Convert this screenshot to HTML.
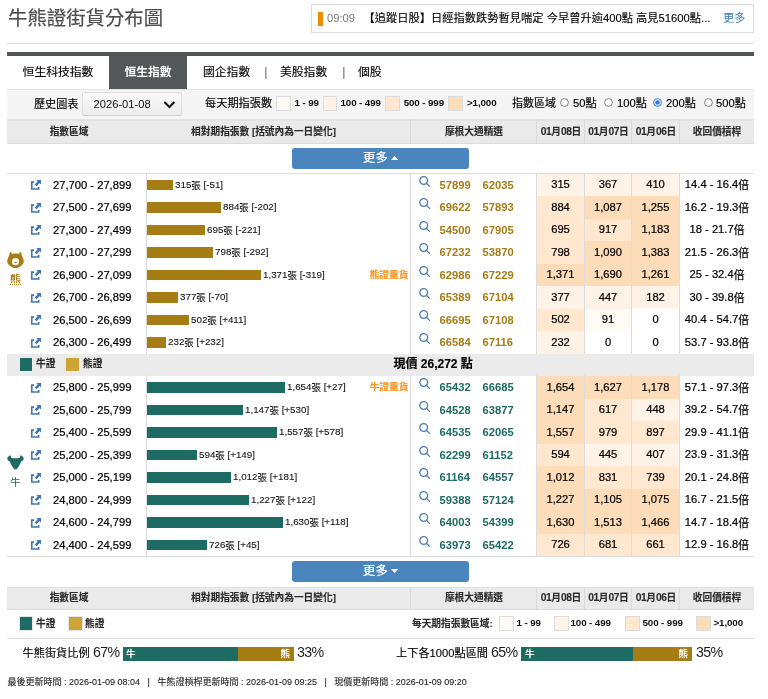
<!DOCTYPE html>
<html lang="zh-Hant"><head><meta charset="utf-8"><title>牛熊證街貨分布圖</title>
<style>
html,body{margin:0;padding:0;background:#fff;}
body{width:768px;height:699px;position:relative;overflow:hidden;font-family:"Liberation Sans","Noto Sans CJK TC",sans-serif;color:#222;}
.a{position:absolute;white-space:nowrap;}
.c{text-align:center;}
.b{font-weight:bold;}
.t{font-size:11.2px;line-height:14px;color:#000;-webkit-text-stroke:0.22px #000;}
.y{position:relative;top:1px;font-size:10.8px;}
.s{font-size:9.8px;line-height:14px;color:#111;-webkit-text-stroke:0.1px #111;}
.z{position:relative;top:1.2px;font-size:9.4px;}
.hd{font-size:9.7px;line-height:14px;font-weight:bold;color:#2a2a2a;-webkit-text-stroke:0.1px #2a2a2a;}
.jp{font-size:11.2px;line-height:14px;font-weight:bold;}
.d{font-size:10.3px;letter-spacing:-0.45px;}
.lg{font-size:9.8px;line-height:14px;color:#111;letter-spacing:-0.12px;}
.ln{position:absolute;background:#dcdcdc;}
svg{position:absolute;overflow:visible;}
#w{position:absolute;left:0;top:0;width:768px;height:699px;will-change:transform;}
</style></head><body><div id="w">

<div class="a" style="left:8px;top:4.4px;font-size:19.4px;line-height:28px;color:#4d4e50;-webkit-text-stroke:0.2px #4d4e50;">牛熊證街貨分布圖</div>
<div class="a" style="left:311px;top:4px;width:441px;height:27px;border:1px solid #dcdcdc;background:#fff;"></div>
<div class="a" style="left:318px;top:12px;width:5px;height:14px;background:#f08c00;"></div>
<div class="a" style="left:327px;top:11px;font-size:11.2px;line-height:15px;color:#777;">09:09</div>
<div class="a" style="left:363.5px;top:11px;font-size:11.25px;line-height:15px;color:#000;-webkit-text-stroke:0.12px #000;">【追蹤日股】日經指數跌勢暫見喘定 今早曾升逾400點 高見51600點...</div>
<div class="a" style="left:723px;top:11px;font-size:11.2px;line-height:15px;color:#3a78b5;">更多</div>
<div class="ln" style="left:7px;top:43px;width:747px;height:1px;background:#dedede;"></div>
<div class="a" style="left:7px;top:52px;width:747px;height:4px;background:#53575a;"></div>
<div class="a" style="left:109px;top:56px;width:78px;height:33px;background:#53575a;"></div>
<div class="a c" style="left:7px;top:64.3px;width:102px;font-size:11.8px;line-height:16px;color:#000;-webkit-text-stroke:0.12px #000;">恒生科技指數</div>
<div class="a c b" style="left:109px;top:64.3px;width:78px;font-size:11.8px;line-height:16px;color:#fff;">恒生指數</div>
<div class="a" style="left:203px;top:64.3px;font-size:11.8px;line-height:16px;color:#000;-webkit-text-stroke:0.12px #000;">國企指數</div>
<div class="a" style="left:264.2px;top:64px;font-size:12.4px;line-height:16px;color:#666;">|</div>
<div class="a" style="left:280px;top:64.3px;font-size:11.8px;line-height:16px;color:#000;-webkit-text-stroke:0.12px #000;">美股指數</div>
<div class="a" style="left:342.2px;top:64px;font-size:12.4px;line-height:16px;color:#666;">|</div>
<div class="a" style="left:358px;top:64.3px;font-size:11.8px;line-height:16px;color:#000;-webkit-text-stroke:0.12px #000;">個股</div>
<div class="a" style="left:7px;top:89px;width:747px;height:30.5px;background:#f5f5f5;border-top:1px solid #e4e4e4;box-sizing:border-box;"></div>
<div class="a" style="left:34px;top:95.5px;font-size:11.1px;line-height:16px;color:#000;-webkit-text-stroke:0.15px #000;">歷史圖表</div>
<div class="a" style="left:82px;top:92px;width:100px;height:24px;box-sizing:border-box;border:1px solid #dcdcdc;border-bottom-color:#cfcfcf;background:linear-gradient(#f8f8f8,#ededed);border-radius:2px;"></div>
<div class="a" style="left:93.5px;top:96px;font-size:11.2px;line-height:16px;color:#111;">2026-01-08</div>
<svg style="left:163px;top:100px;" width="13" height="9" viewBox="0 0 13 9"><path d="M1.4 2 L6.4 7 L11.4 2" fill="none" stroke="#111" stroke-width="2"/></svg>
<div class="a" style="left:205px;top:95px;font-size:11.2px;line-height:16px;color:#000;-webkit-text-stroke:0.15px #000;">每天期指張數</div>
<div class="a" style="left:276px;top:96px;width:15px;height:15px;background:#fffaf3;border:1px solid #dcdcdc;box-sizing:border-box;"></div>
<div class="a b lg" style="left:294.5px;top:95.5px;">1 - 99</div>
<div class="a" style="left:323px;top:96px;width:14px;height:15px;background:#fff2e6;border:1px solid #dcdcdc;box-sizing:border-box;"></div>
<div class="a b lg" style="left:340.5px;top:95.5px;">100 - 499</div>
<div class="a" style="left:385px;top:96px;width:15px;height:15px;background:#ffe7d0;border:1px solid #dcdcdc;box-sizing:border-box;"></div>
<div class="a b lg" style="left:403.7px;top:95.5px;">500 - 999</div>
<div class="a" style="left:448px;top:96px;width:15px;height:15px;background:#fdddb9;border:1px solid #dcdcdc;box-sizing:border-box;"></div>
<div class="a b lg" style="left:467px;top:95.5px;">&gt;1,000</div>
<div class="a" style="left:512px;top:95px;font-size:11.0px;line-height:16px;color:#000;-webkit-text-stroke:0.15px #000;">指數區域</div>
<svg style="left:560.3px;top:98.2px;" width="9" height="9" viewBox="0 0 9 9"><circle cx="4.5" cy="4.5" r="3.9" fill="#fff" stroke="#767676" stroke-width="0.9"/></svg>
<div class="a" style="left:573px;top:95px;font-size:11.2px;line-height:16px;color:#000;-webkit-text-stroke:0.15px #000;">50點</div>
<svg style="left:604.3px;top:98.2px;" width="9" height="9" viewBox="0 0 9 9"><circle cx="4.5" cy="4.5" r="3.9" fill="#fff" stroke="#767676" stroke-width="0.9"/></svg>
<div class="a" style="left:617px;top:95px;font-size:11.2px;line-height:16px;color:#000;-webkit-text-stroke:0.15px #000;">100點</div>
<svg style="left:653.3px;top:98.2px;" width="9" height="9" viewBox="0 0 9 9"><circle cx="4.5" cy="4.5" r="3.9" fill="#fff" stroke="#2d7be0" stroke-width="1"/><circle cx="4.5" cy="4.5" r="2.3" fill="#2d7be0"/></svg>
<div class="a" style="left:666px;top:95px;font-size:11.2px;line-height:16px;color:#000;-webkit-text-stroke:0.15px #000;">200點</div>
<svg style="left:704.3px;top:98.2px;" width="9" height="9" viewBox="0 0 9 9"><circle cx="4.5" cy="4.5" r="3.9" fill="#fff" stroke="#767676" stroke-width="0.9"/></svg>
<div class="a" style="left:716px;top:95px;font-size:11.2px;line-height:16px;color:#000;-webkit-text-stroke:0.15px #000;">500點</div>
<div class="a" style="left:7px;top:119px;width:747px;height:24.5px;background:#eaeaea;border-top:2px solid #e2e2e2;border-bottom:1px solid #dedede;box-sizing:border-box;"></div>
<div class="a c hd" style="left:7px;top:124.55px;width:124px;">指數區域</div>
<div class="a c hd" style="left:190.5px;top:124.55px;width:146px;">相對期指張數 [括號內為一日變化]</div>
<div class="a c hd" style="left:411px;top:124.55px;width:126px;">摩根大通精選</div>
<div class="a c hd" style="left:537px;top:124.55px;width:48px;"><span class="d">01</span>月<span class="d">08</span>日</div>
<div class="a c hd" style="left:585px;top:124.55px;width:47px;"><span class="d">01</span>月<span class="d">07</span>日</div>
<div class="a c hd" style="left:632px;top:124.55px;width:48px;"><span class="d">01</span>月<span class="d">06</span>日</div>
<div class="a c hd" style="left:680px;top:124.55px;width:74px;">收回價槓桿</div>
<div class="ln" style="left:410px;top:119px;width:1px;height:24.5px;background:#dadada;"></div>
<div class="ln" style="left:536px;top:119px;width:1px;height:24.5px;background:#dadada;"></div>
<div class="ln" style="left:584px;top:119px;width:1px;height:24.5px;background:#dadada;"></div>
<div class="ln" style="left:631px;top:119px;width:1px;height:24.5px;background:#dadada;"></div>
<div class="ln" style="left:679px;top:119px;width:1px;height:24.5px;background:#dadada;"></div>
<div class="a" style="left:292px;top:148px;width:177px;height:21px;background:#4a86bd;border-radius:3px;"></div>
<div class="a" style="left:363px;top:150px;font-size:12.4px;line-height:17px;color:#fff;-webkit-text-stroke:0.25px #fff;">更多</div>
<svg style="left:391px;top:155.8px;" width="7.2" height="4.1" viewBox="0 0 8 5" preserveAspectRatio="none"><path d="M0 5 L4 0 L8 5Z" fill="#fff"/></svg>
<div class="ln" style="left:7px;top:173px;width:747px;height:1px;"></div>
<div class="a" style="left:537px;top:174px;width:47px;height:22px;background:#fff2e6;"></div>
<div class="a" style="left:585px;top:174px;width:46px;height:22px;background:#fff2e6;"></div>
<div class="a" style="left:632px;top:174px;width:47px;height:22px;background:#fff2e6;"></div>
<svg style="left:31px;top:180px;" width="10" height="10" viewBox="0 0 10 10"><path d="M3 2.05H0.75V9H7.65V7" fill="none" stroke="#3f76b0" stroke-width="1.65"/><path d="M4.6 5.3L8 1.9" fill="none" stroke="#3f76b0" stroke-width="2.5"/><path d="M5.3 -0.1H10V4.6Z" fill="#3f76b0"/></svg>
<div class="a t" style="left:53px;top:178px;">27,700 - 27,899</div>
<div class="a" style="left:147px;top:180px;width:26px;height:10px;background:#a67c14;"></div>
<div class="a s" style="left:175.0px;top:178px;">315<span class="z">張</span> [-51]</div>
<svg style="left:419px;top:176px;" width="12" height="12" viewBox="0 0 12 12"><circle cx="4.7" cy="4.5" r="3.9" fill="none" stroke="#4a7db5" stroke-width="1.3"/><path d="M7.6 7.5L10.5 10.4" stroke="#4a7db5" stroke-width="1.3" stroke-linecap="round"/></svg>
<div class="a jp" style="left:439.5px;top:178px;color:#a67c14;">57899</div>
<div class="a jp" style="left:482.5px;top:178px;color:#a67c14;">62035</div>
<div class="a c t" style="left:537px;top:177px;width:47px;">315</div>
<div class="a c t" style="left:585px;top:177px;width:46px;">367</div>
<div class="a c t" style="left:632px;top:177px;width:47px;">410</div>
<div class="a c t" style="left:680px;top:177px;width:74px;">14.4 - 16.4<span class="y">倍</span></div>
<div class="a" style="left:537px;top:196px;width:47px;height:23px;background:#ffe7d0;"></div>
<div class="a" style="left:585px;top:196px;width:46px;height:23px;background:#fdddb9;"></div>
<div class="a" style="left:632px;top:196px;width:47px;height:23px;background:#fdddb9;"></div>
<svg style="left:31px;top:203px;" width="10" height="10" viewBox="0 0 10 10"><path d="M3 2.05H0.75V9H7.65V7" fill="none" stroke="#3f76b0" stroke-width="1.65"/><path d="M4.6 5.3L8 1.9" fill="none" stroke="#3f76b0" stroke-width="2.5"/><path d="M5.3 -0.1H10V4.6Z" fill="#3f76b0"/></svg>
<div class="a t" style="left:53px;top:200px;">27,500 - 27,699</div>
<div class="a" style="left:147px;top:202px;width:74px;height:11px;background:#a67c14;"></div>
<div class="a s" style="left:223.0px;top:200px;">884<span class="z">張</span> [-202]</div>
<svg style="left:419px;top:198px;" width="12" height="12" viewBox="0 0 12 12"><circle cx="4.7" cy="4.5" r="3.9" fill="none" stroke="#4a7db5" stroke-width="1.3"/><path d="M7.6 7.5L10.5 10.4" stroke="#4a7db5" stroke-width="1.3" stroke-linecap="round"/></svg>
<div class="a jp" style="left:439.5px;top:200px;color:#a67c14;">69622</div>
<div class="a jp" style="left:482.5px;top:200px;color:#a67c14;">57893</div>
<div class="a c t" style="left:537px;top:200px;width:47px;">884</div>
<div class="a c t" style="left:585px;top:200px;width:46px;">1,087</div>
<div class="a c t" style="left:632px;top:200px;width:47px;">1,255</div>
<div class="a c t" style="left:680px;top:200px;width:74px;">16.2 - 19.3<span class="y">倍</span></div>
<div class="a" style="left:537px;top:219px;width:47px;height:22px;background:#ffe7d0;"></div>
<div class="a" style="left:585px;top:219px;width:46px;height:22px;background:#ffe7d0;"></div>
<div class="a" style="left:632px;top:219px;width:47px;height:22px;background:#fdddb9;"></div>
<svg style="left:31px;top:225px;" width="10" height="10" viewBox="0 0 10 10"><path d="M3 2.05H0.75V9H7.65V7" fill="none" stroke="#3f76b0" stroke-width="1.65"/><path d="M4.6 5.3L8 1.9" fill="none" stroke="#3f76b0" stroke-width="2.5"/><path d="M5.3 -0.1H10V4.6Z" fill="#3f76b0"/></svg>
<div class="a t" style="left:53px;top:223px;">27,300 - 27,499</div>
<div class="a" style="left:147px;top:225px;width:58px;height:10px;background:#a67c14;"></div>
<div class="a s" style="left:207.0px;top:223px;">695<span class="z">張</span> [-221]</div>
<svg style="left:419px;top:221px;" width="12" height="12" viewBox="0 0 12 12"><circle cx="4.7" cy="4.5" r="3.9" fill="none" stroke="#4a7db5" stroke-width="1.3"/><path d="M7.6 7.5L10.5 10.4" stroke="#4a7db5" stroke-width="1.3" stroke-linecap="round"/></svg>
<div class="a jp" style="left:439.5px;top:223px;color:#a67c14;">54500</div>
<div class="a jp" style="left:482.5px;top:223px;color:#a67c14;">67905</div>
<div class="a c t" style="left:537px;top:222px;width:47px;">695</div>
<div class="a c t" style="left:585px;top:222px;width:46px;">917</div>
<div class="a c t" style="left:632px;top:222px;width:47px;">1,183</div>
<div class="a c t" style="left:680px;top:222px;width:74px;">18 - 21.7<span class="y">倍</span></div>
<div class="a" style="left:537px;top:241px;width:47px;height:23px;background:#ffe7d0;"></div>
<div class="a" style="left:585px;top:241px;width:46px;height:23px;background:#fdddb9;"></div>
<div class="a" style="left:632px;top:241px;width:47px;height:23px;background:#fdddb9;"></div>
<svg style="left:31px;top:248px;" width="10" height="10" viewBox="0 0 10 10"><path d="M3 2.05H0.75V9H7.65V7" fill="none" stroke="#3f76b0" stroke-width="1.65"/><path d="M4.6 5.3L8 1.9" fill="none" stroke="#3f76b0" stroke-width="2.5"/><path d="M5.3 -0.1H10V4.6Z" fill="#3f76b0"/></svg>
<div class="a t" style="left:53px;top:245px;">27,100 - 27,299</div>
<div class="a" style="left:147px;top:247px;width:66px;height:11px;background:#a67c14;"></div>
<div class="a s" style="left:215.0px;top:245px;">798<span class="z">張</span> [-292]</div>
<svg style="left:419px;top:243px;" width="12" height="12" viewBox="0 0 12 12"><circle cx="4.7" cy="4.5" r="3.9" fill="none" stroke="#4a7db5" stroke-width="1.3"/><path d="M7.6 7.5L10.5 10.4" stroke="#4a7db5" stroke-width="1.3" stroke-linecap="round"/></svg>
<div class="a jp" style="left:439.5px;top:245px;color:#a67c14;">67232</div>
<div class="a jp" style="left:482.5px;top:245px;color:#a67c14;">53870</div>
<div class="a c t" style="left:537px;top:245px;width:47px;">798</div>
<div class="a c t" style="left:585px;top:245px;width:46px;">1,090</div>
<div class="a c t" style="left:632px;top:245px;width:47px;">1,383</div>
<div class="a c t" style="left:680px;top:245px;width:74px;">21.5 - 26.3<span class="y">倍</span></div>
<div class="a" style="left:537px;top:264px;width:47px;height:22px;background:#fdddb9;"></div>
<div class="a" style="left:585px;top:264px;width:46px;height:22px;background:#fdddb9;"></div>
<div class="a" style="left:632px;top:264px;width:47px;height:22px;background:#fdddb9;"></div>
<svg style="left:31px;top:270px;" width="10" height="10" viewBox="0 0 10 10"><path d="M3 2.05H0.75V9H7.65V7" fill="none" stroke="#3f76b0" stroke-width="1.65"/><path d="M4.6 5.3L8 1.9" fill="none" stroke="#3f76b0" stroke-width="2.5"/><path d="M5.3 -0.1H10V4.6Z" fill="#3f76b0"/></svg>
<div class="a t" style="left:53px;top:268px;">26,900 - 27,099</div>
<div class="a" style="left:147px;top:270px;width:114px;height:10px;background:#a67c14;"></div>
<div class="a s" style="left:263.0px;top:268px;">1,371<span class="z">張</span> [-319]</div>
<div class="a b" style="left:369.7px;top:268px;font-size:9.7px;line-height:14px;color:#f7941d;-webkit-text-stroke:0.15px #f7941d;transform:scaleY(0.92);">熊證重貨</div>
<svg style="left:419px;top:266px;" width="12" height="12" viewBox="0 0 12 12"><circle cx="4.7" cy="4.5" r="3.9" fill="none" stroke="#4a7db5" stroke-width="1.3"/><path d="M7.6 7.5L10.5 10.4" stroke="#4a7db5" stroke-width="1.3" stroke-linecap="round"/></svg>
<div class="a jp" style="left:439.5px;top:268px;color:#a67c14;">62986</div>
<div class="a jp" style="left:482.5px;top:268px;color:#a67c14;">67229</div>
<div class="a c t" style="left:537px;top:267px;width:47px;">1,371</div>
<div class="a c t" style="left:585px;top:267px;width:46px;">1,690</div>
<div class="a c t" style="left:632px;top:267px;width:47px;">1,261</div>
<div class="a c t" style="left:680px;top:267px;width:74px;">25 - 32.4<span class="y">倍</span></div>
<div class="a" style="left:537px;top:286px;width:47px;height:23px;background:#fff2e6;"></div>
<div class="a" style="left:585px;top:286px;width:46px;height:23px;background:#fff2e6;"></div>
<div class="a" style="left:632px;top:286px;width:47px;height:23px;background:#fff2e6;"></div>
<svg style="left:31px;top:293px;" width="10" height="10" viewBox="0 0 10 10"><path d="M3 2.05H0.75V9H7.65V7" fill="none" stroke="#3f76b0" stroke-width="1.65"/><path d="M4.6 5.3L8 1.9" fill="none" stroke="#3f76b0" stroke-width="2.5"/><path d="M5.3 -0.1H10V4.6Z" fill="#3f76b0"/></svg>
<div class="a t" style="left:53px;top:290px;">26,700 - 26,899</div>
<div class="a" style="left:147px;top:292px;width:31px;height:11px;background:#a67c14;"></div>
<div class="a s" style="left:180.0px;top:290px;">377<span class="z">張</span> [-70]</div>
<svg style="left:419px;top:288px;" width="12" height="12" viewBox="0 0 12 12"><circle cx="4.7" cy="4.5" r="3.9" fill="none" stroke="#4a7db5" stroke-width="1.3"/><path d="M7.6 7.5L10.5 10.4" stroke="#4a7db5" stroke-width="1.3" stroke-linecap="round"/></svg>
<div class="a jp" style="left:439.5px;top:290px;color:#a67c14;">65389</div>
<div class="a jp" style="left:482.5px;top:290px;color:#a67c14;">67104</div>
<div class="a c t" style="left:537px;top:290px;width:47px;">377</div>
<div class="a c t" style="left:585px;top:290px;width:46px;">447</div>
<div class="a c t" style="left:632px;top:290px;width:47px;">182</div>
<div class="a c t" style="left:680px;top:290px;width:74px;">30 - 39.8<span class="y">倍</span></div>
<div class="a" style="left:537px;top:309px;width:47px;height:22px;background:#ffe7d0;"></div>
<div class="a" style="left:585px;top:309px;width:46px;height:22px;background:#fffaf3;"></div>
<div class="a" style="left:632px;top:309px;width:47px;height:22px;background:#ffffff;"></div>
<svg style="left:31px;top:315px;" width="10" height="10" viewBox="0 0 10 10"><path d="M3 2.05H0.75V9H7.65V7" fill="none" stroke="#3f76b0" stroke-width="1.65"/><path d="M4.6 5.3L8 1.9" fill="none" stroke="#3f76b0" stroke-width="2.5"/><path d="M5.3 -0.1H10V4.6Z" fill="#3f76b0"/></svg>
<div class="a t" style="left:53px;top:313px;">26,500 - 26,699</div>
<div class="a" style="left:147px;top:315px;width:42px;height:10px;background:#a67c14;"></div>
<div class="a s" style="left:191.0px;top:313px;">502<span class="z">張</span> [+411]</div>
<svg style="left:419px;top:310px;" width="12" height="12" viewBox="0 0 12 12"><circle cx="4.7" cy="4.5" r="3.9" fill="none" stroke="#4a7db5" stroke-width="1.3"/><path d="M7.6 7.5L10.5 10.4" stroke="#4a7db5" stroke-width="1.3" stroke-linecap="round"/></svg>
<div class="a jp" style="left:439.5px;top:313px;color:#a67c14;">66695</div>
<div class="a jp" style="left:482.5px;top:313px;color:#a67c14;">67108</div>
<div class="a c t" style="left:537px;top:312px;width:47px;">502</div>
<div class="a c t" style="left:585px;top:312px;width:46px;">91</div>
<div class="a c t" style="left:632px;top:312px;width:47px;">0</div>
<div class="a c t" style="left:680px;top:312px;width:74px;">40.4 - 54.7<span class="y">倍</span></div>
<div class="a" style="left:537px;top:331px;width:47px;height:23px;background:#fff2e6;"></div>
<div class="a" style="left:585px;top:331px;width:46px;height:23px;background:#ffffff;"></div>
<div class="a" style="left:632px;top:331px;width:47px;height:23px;background:#ffffff;"></div>
<svg style="left:31px;top:338px;" width="10" height="10" viewBox="0 0 10 10"><path d="M3 2.05H0.75V9H7.65V7" fill="none" stroke="#3f76b0" stroke-width="1.65"/><path d="M4.6 5.3L8 1.9" fill="none" stroke="#3f76b0" stroke-width="2.5"/><path d="M5.3 -0.1H10V4.6Z" fill="#3f76b0"/></svg>
<div class="a t" style="left:53px;top:335px;">26,300 - 26,499</div>
<div class="a" style="left:147px;top:337px;width:19px;height:11px;background:#a67c14;"></div>
<div class="a s" style="left:168.0px;top:335px;">232<span class="z">張</span> [+232]</div>
<svg style="left:419px;top:333px;" width="12" height="12" viewBox="0 0 12 12"><circle cx="4.7" cy="4.5" r="3.9" fill="none" stroke="#4a7db5" stroke-width="1.3"/><path d="M7.6 7.5L10.5 10.4" stroke="#4a7db5" stroke-width="1.3" stroke-linecap="round"/></svg>
<div class="a jp" style="left:439.5px;top:335px;color:#a67c14;">66584</div>
<div class="a jp" style="left:482.5px;top:335px;color:#a67c14;">67116</div>
<div class="a c t" style="left:537px;top:335px;width:47px;">232</div>
<div class="a c t" style="left:585px;top:335px;width:46px;">0</div>
<div class="a c t" style="left:632px;top:335px;width:47px;">0</div>
<div class="a c t" style="left:680px;top:335px;width:74px;">53.7 - 93.8<span class="y">倍</span></div>
<div class="ln" style="left:146px;top:173px;width:1px;height:181px;"></div>
<div class="ln" style="left:410px;top:173px;width:1px;height:181px;"></div>
<div class="ln" style="left:536px;top:173px;width:1px;height:181px;background:#dcdcdc;"></div>
<div class="ln" style="left:584px;top:173px;width:1px;height:181px;background:#dcdcdc;"></div>
<div class="ln" style="left:631px;top:173px;width:1px;height:181px;background:#dcdcdc;"></div>
<div class="ln" style="left:679px;top:173px;width:1px;height:181px;background:#dcdcdc;"></div>
<div class="a" style="left:7px;top:354.00px;width:747px;height:22px;background:#ebebeb;"></div>
<div class="a" style="left:20px;top:358px;width:12px;height:13px;background:#1d6b62;"></div>
<div class="a hd" style="left:36px;top:357px;">牛證</div>
<div class="a" style="left:66px;top:358px;width:13px;height:13px;background:#cfa436;"></div>
<div class="a hd" style="left:83px;top:357px;">熊證</div>
<div class="a b" style="left:393.5px;top:356px;font-size:12px;line-height:17px;color:#000;-webkit-text-stroke:0.15px #000;">現價 26,272 點</div>
<div class="a" style="left:537px;top:376px;width:47px;height:23px;background:#fdddb9;"></div>
<div class="a" style="left:585px;top:376px;width:46px;height:23px;background:#fdddb9;"></div>
<div class="a" style="left:632px;top:376px;width:47px;height:23px;background:#fdddb9;"></div>
<svg style="left:31px;top:383px;" width="10" height="10" viewBox="0 0 10 10"><path d="M3 2.05H0.75V9H7.65V7" fill="none" stroke="#3f76b0" stroke-width="1.65"/><path d="M4.6 5.3L8 1.9" fill="none" stroke="#3f76b0" stroke-width="2.5"/><path d="M5.3 -0.1H10V4.6Z" fill="#3f76b0"/></svg>
<div class="a t" style="left:53px;top:380px;">25,800 - 25,999</div>
<div class="a" style="left:147px;top:382px;width:138px;height:11px;background:#1d6b62;"></div>
<div class="a s" style="left:287.0px;top:380px;">1,654<span class="z">張</span> [+27]</div>
<div class="a b" style="left:369.7px;top:380px;font-size:9.7px;line-height:14px;color:#f7941d;-webkit-text-stroke:0.15px #f7941d;transform:scaleY(0.92);">牛證重貨</div>
<svg style="left:419px;top:378px;" width="12" height="12" viewBox="0 0 12 12"><circle cx="4.7" cy="4.5" r="3.9" fill="none" stroke="#4a7db5" stroke-width="1.3"/><path d="M7.6 7.5L10.5 10.4" stroke="#4a7db5" stroke-width="1.3" stroke-linecap="round"/></svg>
<div class="a jp" style="left:439.5px;top:380px;color:#1d6b62;">65432</div>
<div class="a jp" style="left:482.5px;top:380px;color:#1d6b62;">66685</div>
<div class="a c t" style="left:537px;top:380px;width:47px;">1,654</div>
<div class="a c t" style="left:585px;top:380px;width:46px;">1,627</div>
<div class="a c t" style="left:632px;top:380px;width:47px;">1,178</div>
<div class="a c t" style="left:680px;top:380px;width:74px;">57.1 - 97.3<span class="y">倍</span></div>
<div class="a" style="left:537px;top:399px;width:47px;height:22px;background:#fdddb9;"></div>
<div class="a" style="left:585px;top:399px;width:46px;height:22px;background:#ffe7d0;"></div>
<div class="a" style="left:632px;top:399px;width:47px;height:22px;background:#fff2e6;"></div>
<svg style="left:31px;top:405px;" width="10" height="10" viewBox="0 0 10 10"><path d="M3 2.05H0.75V9H7.65V7" fill="none" stroke="#3f76b0" stroke-width="1.65"/><path d="M4.6 5.3L8 1.9" fill="none" stroke="#3f76b0" stroke-width="2.5"/><path d="M5.3 -0.1H10V4.6Z" fill="#3f76b0"/></svg>
<div class="a t" style="left:53px;top:403px;">25,600 - 25,799</div>
<div class="a" style="left:147px;top:405px;width:96px;height:10px;background:#1d6b62;"></div>
<div class="a s" style="left:245.0px;top:403px;">1,147<span class="z">張</span> [+530]</div>
<svg style="left:419px;top:401px;" width="12" height="12" viewBox="0 0 12 12"><circle cx="4.7" cy="4.5" r="3.9" fill="none" stroke="#4a7db5" stroke-width="1.3"/><path d="M7.6 7.5L10.5 10.4" stroke="#4a7db5" stroke-width="1.3" stroke-linecap="round"/></svg>
<div class="a jp" style="left:439.5px;top:403px;color:#1d6b62;">64528</div>
<div class="a jp" style="left:482.5px;top:403px;color:#1d6b62;">63877</div>
<div class="a c t" style="left:537px;top:402px;width:47px;">1,147</div>
<div class="a c t" style="left:585px;top:402px;width:46px;">617</div>
<div class="a c t" style="left:632px;top:402px;width:47px;">448</div>
<div class="a c t" style="left:680px;top:402px;width:74px;">39.2 - 54.7<span class="y">倍</span></div>
<div class="a" style="left:537px;top:421px;width:47px;height:23px;background:#fdddb9;"></div>
<div class="a" style="left:585px;top:421px;width:46px;height:23px;background:#ffe7d0;"></div>
<div class="a" style="left:632px;top:421px;width:47px;height:23px;background:#ffe7d0;"></div>
<svg style="left:31px;top:428px;" width="10" height="10" viewBox="0 0 10 10"><path d="M3 2.05H0.75V9H7.65V7" fill="none" stroke="#3f76b0" stroke-width="1.65"/><path d="M4.6 5.3L8 1.9" fill="none" stroke="#3f76b0" stroke-width="2.5"/><path d="M5.3 -0.1H10V4.6Z" fill="#3f76b0"/></svg>
<div class="a t" style="left:53px;top:425px;">25,400 - 25,599</div>
<div class="a" style="left:147px;top:427px;width:130px;height:11px;background:#1d6b62;"></div>
<div class="a s" style="left:279.0px;top:425px;">1,557<span class="z">張</span> [+578]</div>
<svg style="left:419px;top:423px;" width="12" height="12" viewBox="0 0 12 12"><circle cx="4.7" cy="4.5" r="3.9" fill="none" stroke="#4a7db5" stroke-width="1.3"/><path d="M7.6 7.5L10.5 10.4" stroke="#4a7db5" stroke-width="1.3" stroke-linecap="round"/></svg>
<div class="a jp" style="left:439.5px;top:425px;color:#1d6b62;">64535</div>
<div class="a jp" style="left:482.5px;top:425px;color:#1d6b62;">62065</div>
<div class="a c t" style="left:537px;top:425px;width:47px;">1,557</div>
<div class="a c t" style="left:585px;top:425px;width:46px;">979</div>
<div class="a c t" style="left:632px;top:425px;width:47px;">897</div>
<div class="a c t" style="left:680px;top:425px;width:74px;">29.9 - 41.1<span class="y">倍</span></div>
<div class="a" style="left:537px;top:444px;width:47px;height:22px;background:#ffe7d0;"></div>
<div class="a" style="left:585px;top:444px;width:46px;height:22px;background:#fff2e6;"></div>
<div class="a" style="left:632px;top:444px;width:47px;height:22px;background:#fff2e6;"></div>
<svg style="left:31px;top:450px;" width="10" height="10" viewBox="0 0 10 10"><path d="M3 2.05H0.75V9H7.65V7" fill="none" stroke="#3f76b0" stroke-width="1.65"/><path d="M4.6 5.3L8 1.9" fill="none" stroke="#3f76b0" stroke-width="2.5"/><path d="M5.3 -0.1H10V4.6Z" fill="#3f76b0"/></svg>
<div class="a t" style="left:53px;top:448px;">25,200 - 25,399</div>
<div class="a" style="left:147px;top:450px;width:50px;height:10px;background:#1d6b62;"></div>
<div class="a s" style="left:199.0px;top:448px;">594<span class="z">張</span> [+149]</div>
<svg style="left:419px;top:446px;" width="12" height="12" viewBox="0 0 12 12"><circle cx="4.7" cy="4.5" r="3.9" fill="none" stroke="#4a7db5" stroke-width="1.3"/><path d="M7.6 7.5L10.5 10.4" stroke="#4a7db5" stroke-width="1.3" stroke-linecap="round"/></svg>
<div class="a jp" style="left:439.5px;top:448px;color:#1d6b62;">62299</div>
<div class="a jp" style="left:482.5px;top:448px;color:#1d6b62;">61152</div>
<div class="a c t" style="left:537px;top:447px;width:47px;">594</div>
<div class="a c t" style="left:585px;top:447px;width:46px;">445</div>
<div class="a c t" style="left:632px;top:447px;width:47px;">407</div>
<div class="a c t" style="left:680px;top:447px;width:74px;">23.9 - 31.3<span class="y">倍</span></div>
<div class="a" style="left:537px;top:466px;width:47px;height:23px;background:#fdddb9;"></div>
<div class="a" style="left:585px;top:466px;width:46px;height:23px;background:#ffe7d0;"></div>
<div class="a" style="left:632px;top:466px;width:47px;height:23px;background:#ffe7d0;"></div>
<svg style="left:31px;top:473px;" width="10" height="10" viewBox="0 0 10 10"><path d="M3 2.05H0.75V9H7.65V7" fill="none" stroke="#3f76b0" stroke-width="1.65"/><path d="M4.6 5.3L8 1.9" fill="none" stroke="#3f76b0" stroke-width="2.5"/><path d="M5.3 -0.1H10V4.6Z" fill="#3f76b0"/></svg>
<div class="a t" style="left:53px;top:470px;">25,000 - 25,199</div>
<div class="a" style="left:147px;top:472px;width:84px;height:11px;background:#1d6b62;"></div>
<div class="a s" style="left:233.0px;top:470px;">1,012<span class="z">張</span> [+181]</div>
<svg style="left:419px;top:468px;" width="12" height="12" viewBox="0 0 12 12"><circle cx="4.7" cy="4.5" r="3.9" fill="none" stroke="#4a7db5" stroke-width="1.3"/><path d="M7.6 7.5L10.5 10.4" stroke="#4a7db5" stroke-width="1.3" stroke-linecap="round"/></svg>
<div class="a jp" style="left:439.5px;top:470px;color:#1d6b62;">61164</div>
<div class="a jp" style="left:482.5px;top:470px;color:#1d6b62;">64557</div>
<div class="a c t" style="left:537px;top:470px;width:47px;">1,012</div>
<div class="a c t" style="left:585px;top:470px;width:46px;">831</div>
<div class="a c t" style="left:632px;top:470px;width:47px;">739</div>
<div class="a c t" style="left:680px;top:470px;width:74px;">20.1 - 24.8<span class="y">倍</span></div>
<div class="a" style="left:537px;top:489px;width:47px;height:22px;background:#fdddb9;"></div>
<div class="a" style="left:585px;top:489px;width:46px;height:22px;background:#fdddb9;"></div>
<div class="a" style="left:632px;top:489px;width:47px;height:22px;background:#fdddb9;"></div>
<svg style="left:31px;top:495px;" width="10" height="10" viewBox="0 0 10 10"><path d="M3 2.05H0.75V9H7.65V7" fill="none" stroke="#3f76b0" stroke-width="1.65"/><path d="M4.6 5.3L8 1.9" fill="none" stroke="#3f76b0" stroke-width="2.5"/><path d="M5.3 -0.1H10V4.6Z" fill="#3f76b0"/></svg>
<div class="a t" style="left:53px;top:493px;">24,800 - 24,999</div>
<div class="a" style="left:147px;top:495px;width:102px;height:10px;background:#1d6b62;"></div>
<div class="a s" style="left:251.0px;top:493px;">1,227<span class="z">張</span> [+122]</div>
<svg style="left:419px;top:491px;" width="12" height="12" viewBox="0 0 12 12"><circle cx="4.7" cy="4.5" r="3.9" fill="none" stroke="#4a7db5" stroke-width="1.3"/><path d="M7.6 7.5L10.5 10.4" stroke="#4a7db5" stroke-width="1.3" stroke-linecap="round"/></svg>
<div class="a jp" style="left:439.5px;top:493px;color:#1d6b62;">59388</div>
<div class="a jp" style="left:482.5px;top:493px;color:#1d6b62;">57124</div>
<div class="a c t" style="left:537px;top:492px;width:47px;">1,227</div>
<div class="a c t" style="left:585px;top:492px;width:46px;">1,105</div>
<div class="a c t" style="left:632px;top:492px;width:47px;">1,075</div>
<div class="a c t" style="left:680px;top:492px;width:74px;">16.7 - 21.5<span class="y">倍</span></div>
<div class="a" style="left:537px;top:511px;width:47px;height:23px;background:#fdddb9;"></div>
<div class="a" style="left:585px;top:511px;width:46px;height:23px;background:#fdddb9;"></div>
<div class="a" style="left:632px;top:511px;width:47px;height:23px;background:#fdddb9;"></div>
<svg style="left:31px;top:518px;" width="10" height="10" viewBox="0 0 10 10"><path d="M3 2.05H0.75V9H7.65V7" fill="none" stroke="#3f76b0" stroke-width="1.65"/><path d="M4.6 5.3L8 1.9" fill="none" stroke="#3f76b0" stroke-width="2.5"/><path d="M5.3 -0.1H10V4.6Z" fill="#3f76b0"/></svg>
<div class="a t" style="left:53px;top:515px;">24,600 - 24,799</div>
<div class="a" style="left:147px;top:517px;width:136px;height:11px;background:#1d6b62;"></div>
<div class="a s" style="left:285.0px;top:515px;">1,630<span class="z">張</span> [+118]</div>
<svg style="left:419px;top:513px;" width="12" height="12" viewBox="0 0 12 12"><circle cx="4.7" cy="4.5" r="3.9" fill="none" stroke="#4a7db5" stroke-width="1.3"/><path d="M7.6 7.5L10.5 10.4" stroke="#4a7db5" stroke-width="1.3" stroke-linecap="round"/></svg>
<div class="a jp" style="left:439.5px;top:515px;color:#1d6b62;">64003</div>
<div class="a jp" style="left:482.5px;top:515px;color:#1d6b62;">54399</div>
<div class="a c t" style="left:537px;top:515px;width:47px;">1,630</div>
<div class="a c t" style="left:585px;top:515px;width:46px;">1,513</div>
<div class="a c t" style="left:632px;top:515px;width:47px;">1,466</div>
<div class="a c t" style="left:680px;top:515px;width:74px;">14.7 - 18.4<span class="y">倍</span></div>
<div class="a" style="left:537px;top:534px;width:47px;height:22px;background:#ffe7d0;"></div>
<div class="a" style="left:585px;top:534px;width:46px;height:22px;background:#ffe7d0;"></div>
<div class="a" style="left:632px;top:534px;width:47px;height:22px;background:#ffe7d0;"></div>
<svg style="left:31px;top:540px;" width="10" height="10" viewBox="0 0 10 10"><path d="M3 2.05H0.75V9H7.65V7" fill="none" stroke="#3f76b0" stroke-width="1.65"/><path d="M4.6 5.3L8 1.9" fill="none" stroke="#3f76b0" stroke-width="2.5"/><path d="M5.3 -0.1H10V4.6Z" fill="#3f76b0"/></svg>
<div class="a t" style="left:53px;top:538px;">24,400 - 24,599</div>
<div class="a" style="left:147px;top:540px;width:60px;height:10px;background:#1d6b62;"></div>
<div class="a s" style="left:209.0px;top:538px;">726<span class="z">張</span> [+45]</div>
<svg style="left:419px;top:536px;" width="12" height="12" viewBox="0 0 12 12"><circle cx="4.7" cy="4.5" r="3.9" fill="none" stroke="#4a7db5" stroke-width="1.3"/><path d="M7.6 7.5L10.5 10.4" stroke="#4a7db5" stroke-width="1.3" stroke-linecap="round"/></svg>
<div class="a jp" style="left:439.5px;top:538px;color:#1d6b62;">63973</div>
<div class="a jp" style="left:482.5px;top:538px;color:#1d6b62;">65422</div>
<div class="a c t" style="left:537px;top:537px;width:47px;">726</div>
<div class="a c t" style="left:585px;top:537px;width:46px;">681</div>
<div class="a c t" style="left:632px;top:537px;width:47px;">661</div>
<div class="a c t" style="left:680px;top:537px;width:74px;">12.9 - 16.8<span class="y">倍</span></div>
<div class="ln" style="left:146px;top:375px;width:1px;height:181px;"></div>
<div class="ln" style="left:410px;top:375px;width:1px;height:181px;"></div>
<div class="ln" style="left:536px;top:375px;width:1px;height:181px;background:#dcdcdc;"></div>
<div class="ln" style="left:584px;top:375px;width:1px;height:181px;background:#dcdcdc;"></div>
<div class="ln" style="left:631px;top:375px;width:1px;height:181px;background:#dcdcdc;"></div>
<div class="ln" style="left:679px;top:375px;width:1px;height:181px;background:#dcdcdc;"></div>
<div class="ln" style="left:7px;top:556px;width:747px;height:1px;"></div>
<svg style="left:7px;top:252px;" width="17" height="16" viewBox="0 0 17 16"><path d="M3.3 0C3.9 0 4.6 1 5.2 1.9C7.2 1.5 9.8 1.5 11.8 1.9C12.4 1 13.1 0 13.7 0C14.3 0 14.6 1.5 14.6 3C15.6 5 16.8 7.5 16.8 9.5C16.8 11.5 15 13.2 13 14.4C11.5 15.3 10 16 8.5 16C7 16 5.5 15.3 4 14.4C2 13.2 0.2 11.5 0.2 9.5C0.2 7.5 1.4 5 2.4 3C2.4 1.5 2.7 0 3.3 0Z" fill="#a67c14"/><ellipse cx="8.5" cy="9.7" rx="3.5" ry="3.6" fill="#fff"/><ellipse cx="8.5" cy="10.5" rx="1.3" ry="0.75" fill="#a67c14"/></svg>
<div class="a c b" style="left:9.5px;top:273px;width:12px;font-size:11px;line-height:11px;color:#a67c14;transform:scaleY(0.79);transform-origin:50% 100%;">熊</div>
<div class="a" style="left:10px;top:284px;width:11px;height:0;border-bottom:1px dotted #a67c14;"></div>
<svg style="left:7px;top:455px;" width="17" height="15" viewBox="0 0 17 15"><path d="M4.2 0.6C2.5 0.3 0.3 1.8 0.3 3.6C0.3 5 1.5 6 2.8 6.4C3.8 9 5.2 11.5 6.8 13.6C7.6 14.8 9.4 14.8 10.2 13.6C11.8 11.5 13.2 9 14.2 6.4C15.5 6 16.7 5 16.7 3.6C16.7 1.8 14.5 0.3 12.8 0.6C13.3 1.3 13.3 2.2 12.6 2.7C10.4 3.5 6.6 3.5 4.4 2.7C3.7 2.2 3.7 1.3 4.2 0.6Z" fill="#1d6b62"/></svg>
<div class="a c" style="left:5px;top:476px;width:21px;font-size:10.4px;line-height:14px;color:#1d6b62;">牛</div>
<div class="a" style="left:292px;top:561px;width:177px;height:21px;background:#4a86bd;border-radius:3px;"></div>
<div class="a" style="left:363px;top:563px;font-size:12.4px;line-height:17px;color:#fff;-webkit-text-stroke:0.25px #fff;">更多</div>
<svg style="left:391px;top:569.2px;" width="7.2" height="4.1" viewBox="0 0 8 5" preserveAspectRatio="none"><path d="M0 0 L4 5 L8 0Z" fill="#fff"/></svg>
<div class="a" style="left:7px;top:586.6px;width:747px;height:23px;background:#eaeaea;border-top:1px solid #e2e2e2;border-bottom:1px solid #dedede;box-sizing:border-box;"></div>
<div class="a c hd" style="left:7px;top:591.1px;width:124px;">指數區域</div>
<div class="a c hd" style="left:190.5px;top:591.1px;width:146px;">相對期指張數 [括號內為一日變化]</div>
<div class="a c hd" style="left:411px;top:591.1px;width:126px;">摩根大通精選</div>
<div class="a c hd" style="left:537px;top:591.1px;width:48px;"><span class="d">01</span>月<span class="d">08</span>日</div>
<div class="a c hd" style="left:585px;top:591.1px;width:47px;"><span class="d">01</span>月<span class="d">07</span>日</div>
<div class="a c hd" style="left:632px;top:591.1px;width:48px;"><span class="d">01</span>月<span class="d">06</span>日</div>
<div class="a c hd" style="left:680px;top:591.1px;width:74px;">收回價槓桿</div>
<div class="ln" style="left:410px;top:586.6px;width:1px;height:23px;background:#dadada;"></div>
<div class="ln" style="left:536px;top:586.6px;width:1px;height:23px;background:#dadada;"></div>
<div class="ln" style="left:584px;top:586.6px;width:1px;height:23px;background:#dadada;"></div>
<div class="ln" style="left:631px;top:586.6px;width:1px;height:23px;background:#dadada;"></div>
<div class="ln" style="left:679px;top:586.6px;width:1px;height:23px;background:#dadada;"></div>
<div class="a" style="left:19px;top:616px;width:14px;height:15px;background:#1d6b62;border:1px solid #e4e4e4;box-sizing:border-box;"></div>
<div class="a hd" style="left:36px;top:616.5px;">牛證</div>
<div class="a" style="left:68px;top:616px;width:15px;height:15px;background:#cfa436;border:1px solid #e4e4e4;box-sizing:border-box;"></div>
<div class="a hd" style="left:85px;top:616.5px;">熊證</div>
<div class="a hd" style="left:412px;top:616.5px;">每天期指張數區域:</div>
<div class="a" style="left:499px;top:615.5px;width:15px;height:15px;background:#fffaf3;border:1px solid #dcdcdc;box-sizing:border-box;"></div>
<div class="a b lg" style="left:516.5px;top:616.0px;">1 - 99</div>
<div class="a" style="left:554px;top:615.5px;width:15px;height:15px;background:#fff2e6;border:1px solid #dcdcdc;box-sizing:border-box;"></div>
<div class="a b lg" style="left:570.5px;top:616.0px;">100 - 499</div>
<div class="a" style="left:625px;top:615.5px;width:15px;height:15px;background:#ffe7d0;border:1px solid #dcdcdc;box-sizing:border-box;"></div>
<div class="a b lg" style="left:642.5px;top:616.0px;">500 - 999</div>
<div class="a" style="left:696px;top:615.5px;width:15px;height:15px;background:#fdddb9;border:1px solid #dcdcdc;box-sizing:border-box;"></div>
<div class="a b lg" style="left:713.5px;top:616.0px;">&gt;1,000</div>
<div class="ln" style="left:7px;top:638px;width:747px;height:1px;"></div>
<div class="a" style="left:22.5px;top:645px;font-size:11.2px;line-height:17px;color:#000;-webkit-text-stroke:0.12px #000;">牛熊街貨比例</div>
<div class="a" style="left:93px;top:643px;font-size:14.2px;line-height:19px;color:#1c1c1c;letter-spacing:-0.7px;">67%</div>
<div class="a" style="left:123px;top:646.5px;width:115px;height:14.5px;background:#1d6b62;"></div>
<div class="a" style="left:238px;top:646.5px;width:56px;height:14.5px;background:#a67c14;"></div>
<div class="a b" style="left:126px;top:647px;font-size:9.6px;line-height:14px;color:#fff;">牛</div>
<div class="a b" style="left:280.5px;top:647px;font-size:9.6px;line-height:14px;color:#fff;">熊</div>
<div class="a" style="left:297px;top:643px;font-size:14.2px;line-height:19px;color:#1c1c1c;letter-spacing:-0.7px;">33%</div>
<div class="a" style="left:396px;top:645px;font-size:11.2px;line-height:17px;color:#000;-webkit-text-stroke:0.12px #000;">上下各1000點區間</div>
<div class="a" style="left:491px;top:643px;font-size:14.2px;line-height:19px;color:#1c1c1c;letter-spacing:-0.7px;">65%</div>
<div class="a" style="left:521px;top:646.5px;width:112px;height:14.5px;background:#1d6b62;"></div>
<div class="a" style="left:633px;top:646.5px;width:59px;height:14.5px;background:#a67c14;"></div>
<div class="a b" style="left:525px;top:647px;font-size:9.6px;line-height:14px;color:#fff;">牛</div>
<div class="a b" style="left:678.5px;top:647px;font-size:9.6px;line-height:14px;color:#fff;">熊</div>
<div class="a" style="left:696px;top:643px;font-size:14.2px;line-height:19px;color:#1c1c1c;letter-spacing:-0.7px;">35%</div>
<div class="a" style="left:7.5px;top:676px;font-size:9.0px;line-height:12px;color:#222;-webkit-text-stroke:0.1px #222;">最後更新時間 : 2026-01-09 08:04&nbsp;&nbsp; | &nbsp;&nbsp;牛熊證槓桿更新時間 : 2026-01-09 09:25&nbsp;&nbsp; | &nbsp;&nbsp;現價更新時間 : 2026-01-09 09:20</div>
</div></body></html>
